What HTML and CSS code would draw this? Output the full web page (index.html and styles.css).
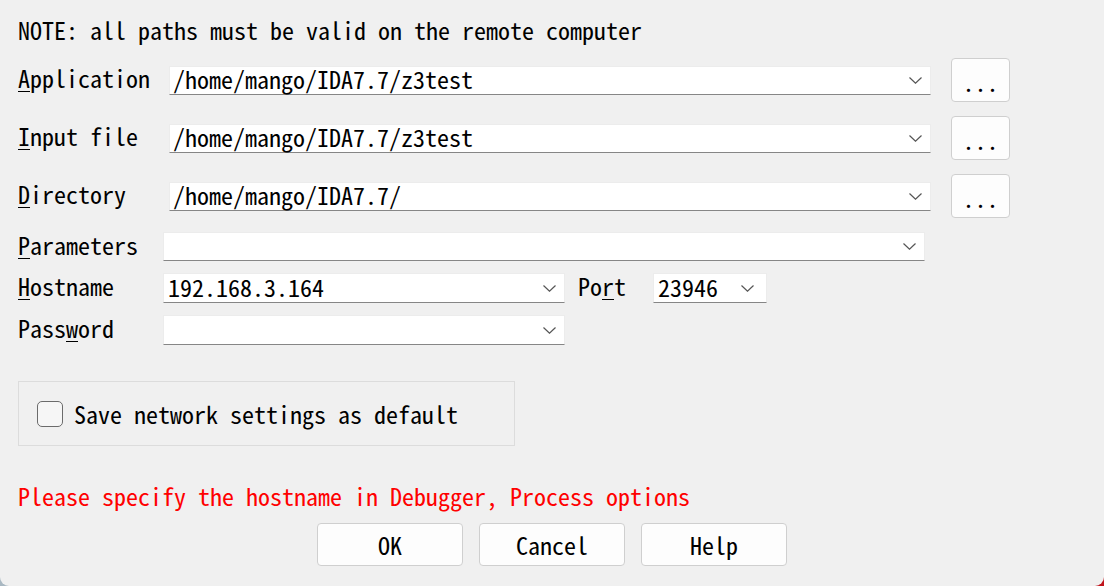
FILE: index.html
```html
<!DOCTYPE html>
<html lang="en">
<head>
<meta charset="utf-8">
<title>Debug application setup</title>
<link rel="stylesheet" href="styles.css">
</head>
<body>
<div class="dialog">
  <p class="note">NOTE: all paths must be valid on the remote computer</p>

  <div class="paths">
    <label class="lbl"><u>A</u>pplication</label>
    <div class="combo"><span class="val">/home/mango/IDA7.7/z3test</span><svg class="chev" viewBox="0 0 13 7"><path d="M0.5 0.5 L6.5 6.2 L12.5 0.5"/></svg></div>
    <button class="browse">...</button>

    <label class="lbl"><u>I</u>nput file</label>
    <div class="combo"><span class="val">/home/mango/IDA7.7/z3test</span><svg class="chev" viewBox="0 0 13 7"><path d="M0.5 0.5 L6.5 6.2 L12.5 0.5"/></svg></div>
    <button class="browse">...</button>

    <label class="lbl"><u>D</u>irectory</label>
    <div class="combo"><span class="val">/home/mango/IDA7.7/</span><svg class="chev" viewBox="0 0 13 7"><path d="M0.5 0.5 L6.5 6.2 L12.5 0.5"/></svg></div>
    <button class="browse">...</button>
  </div>

  <div class="net">
    <label class="lbl"><u>P</u>arameters</label>
    <div class="combo wide"><span class="val"></span><svg class="chev" viewBox="0 0 13 7"><path d="M0.5 0.5 L6.5 6.2 L12.5 0.5"/></svg></div>

    <label class="lbl"><u>H</u>ostname</label>
    <div class="hostrow">
      <div class="combo host"><span class="val">192.168.3.164</span><svg class="chev" viewBox="0 0 13 7"><path d="M0.5 0.5 L6.5 6.2 L12.5 0.5"/></svg></div>
      <label class="lbl port-lbl">Po<u>r</u>t</label>
      <div class="combo port"><span class="val">23946</span><svg class="chev" viewBox="0 0 13 7"><path d="M0.5 0.5 L6.5 6.2 L12.5 0.5"/></svg></div>
    </div>

    <label class="lbl">Pass<u>w</u>ord</label>
    <div class="combo host"><span class="val"></span><svg class="chev" viewBox="0 0 13 7"><path d="M0.5 0.5 L6.5 6.2 L12.5 0.5"/></svg></div>
  </div>

  <div class="group">
    <label class="check"><span class="box"></span><span>Save network settings as default</span></label>
  </div>

  <p class="error">Please specify the hostname in Debugger, Process options</p>

  <div class="actions">
    <button class="btn">OK</button>
    <button class="btn">Cancel</button>
    <button class="btn">Help</button>
  </div>
</div>
</body>
</html>
```
FILE: styles.css
```css
html {
  margin: 0;
  height: 100%;
  background: linear-gradient(to right, #a9b8c2 0%, #a9b8c2 50%, #c0141c 50%, #c0141c 100%);
}

body {
  margin: 0;
  height: 586px;
  overflow: hidden;
  font-family: "Noto Sans Mono CJK SC", "DejaVu Sans Mono", monospace;
  font-size: 24px;
  color: #000;
}

.dialog {
  height: 586px;
  box-sizing: border-box;
  background: #f0f0f0;
  border-radius: 0 0 9px 9px;
  padding: 16px 0 0 18px;
  display: flex;
  flex-direction: column;
}

.note {
  margin: 0;
  height: 28px;
  line-height: 28px;
}

u {
  text-decoration-thickness: 1px;
  text-underline-offset: 3px;
}

.lbl {
  line-height: 28px;
  padding-bottom: 4px;
  white-space: nowrap;
}

.paths {
  margin-top: 14px;
  display: grid;
  grid-template-columns: 151px 762px 59px;
  grid-auto-rows: 44px;
  row-gap: 14px;
  align-items: center;
}

.combo {
  box-sizing: border-box;
  height: 29px;
  background: #fff;
  border: 1px solid #ececec;
  border-bottom: 1px solid #868686;
  display: flex;
  align-items: center;
  justify-content: space-between;
  padding: 0 8px 0 3px;
}

.val {
  line-height: 27px;
  padding-bottom: 3px;
  white-space: nowrap;
}

.chev {
  width: 13px;
  height: 7px;
  flex: none;
}

.chev path {
  fill: none;
  stroke: #555;
  stroke-width: 1.2;
}

.browse {
  box-sizing: border-box;
  width: 59px;
  height: 44px;
  margin-left: 20px;
  background: #fdfdfd;
  border: 1px solid #cfcfcf;
  border-radius: 4px;
  font: inherit;
  color: #000;
  padding: 4px 0 0 0;
  line-height: 28px;
}

.net {
  margin-top: 14px;
  display: grid;
  grid-template-columns: 145px 762px;
  grid-template-rows: 29px 30px 30px;
  row-gap: 12px;
  align-items: center;
}

.net .combo {
  height: 100%;
  padding-left: 4px;
}

.hostrow {
  display: flex;
  align-items: center;
  height: 100%;
}

.combo.host {
  width: 402px;
}

.port-lbl {
  margin-left: 13px;
  width: 48px;
}

.combo.port {
  margin-left: 27px;
  width: 114px;
  padding-right: 12px;
}

.group {
  margin-top: 36px;
  box-sizing: border-box;
  width: 497px;
  height: 65px;
  border: 1px solid #dcdcdc;
  display: flex;
  align-items: center;
  padding-left: 18px;
}

.check {
  display: flex;
  align-items: center;
  gap: 11px;
  line-height: 28px;
}

.box {
  box-sizing: border-box;
  width: 26px;
  height: 26px;
  border: 1.5px solid #6b6b6b;
  border-radius: 5px;
  background: #f6f6f6;
}

.error {
  margin: 36px 0 0 0;
  height: 28px;
  line-height: 28px;
  color: #ff0000;
}

.actions {
  margin: 13px 0 0 -18px;
  display: flex;
  justify-content: center;
  gap: 16px;
}

.btn {
  box-sizing: border-box;
  width: 146px;
  height: 43px;
  background: #fdfdfd;
  border: 1px solid #cfcfcf;
  border-radius: 4px;
  font: inherit;
  color: #000;
  line-height: 28px;
  padding: 0;
}
```
